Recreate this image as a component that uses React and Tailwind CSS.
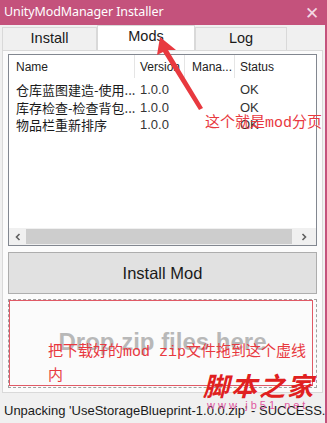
import React from "react";

const rows = [
  ["仓库蓝图建造-使用...", "1.0.0", "", "OK"],
  ["库存检查-检查背包...", "1.0.0", "", "OK"],
  ["物品栏重新排序", "1.0.0", "", "OK"],
];

export default function App() {
  return (
    <div className="relative w-[327px] h-[423px] overflow-hidden bg-[#f0f0f0] font-['Noto_Sans','Noto_Sans_CJK_SC',sans-serif] text-[#1a1a1a]">
      {/* title bar */}
      <div className="flex h-[25px] items-center justify-between bg-[#c4527c] pl-[4px] pr-[8px] text-white">
        <span className="text-[12.5px] leading-none tracking-[-0.1px]">UnityModManager Installer</span>
        <span className="text-[17px] leading-none font-light text-[#f3d9e3]">✕</span>
      </div>

      <div className="flex h-[398px] flex-col border-r-2 border-[#c4527c]">
        {/* tabs */}
        <div className="flex h-[25px] items-end pl-[2px] font-['Liberation_Sans',sans-serif] text-[14.5px]">
          <div className="flex h-[23px] w-[95px] items-center justify-center border border-b-0 border-[#d9d9d9] bg-[#f0f0f0]">Install</div>
          <div className="-mb-px flex h-[26px] w-[98px] items-center justify-center border border-b-0 border-[#d9d9d9] bg-white pb-[3px]">Mods</div>
          <div className="flex h-[23px] w-[92px] items-center justify-center border border-b-0 border-[#d9d9d9] bg-[#f0f0f0]">Log</div>
        </div>

        {/* tab page */}
        <div className="mx-[2px] flex h-[343px] flex-col border border-[#d9d9d9] bg-[#fbfbfb] px-[5px] pt-[3px]">
          {/* list view */}
          <div className="flex h-[192px] flex-col border border-[#828790] bg-white">
            <div className="flex h-[23px] items-center font-['Liberation_Sans',sans-serif] text-[12px] text-[#222]">
              <div className="w-[125px] pl-[7px]">Name</div>
              <div className="h-full w-px bg-[#e5e5e5]" />
              <div className="w-[49px] pl-[5px]">Version</div>
              <div className="h-full w-px bg-[#e5e5e5]" />
              <div className="w-[49px] pl-[7px]">Mana...</div>
              <div className="h-full w-px bg-[#e5e5e5]" />
              <div className="pl-[5px]">Status</div>
            </div>
            <div className="flex flex-col pt-[3px] text-[13px]">
              {rows.map((r, i) => (
                <div key={i} className="flex h-[17.5px] items-center leading-none">
                  <div className="w-[126px] whitespace-nowrap pl-[7px] font-['Noto_Sans_CJK_SC',sans-serif] text-[13px]">{r[0]}</div>
                  <div className="w-[50px] pl-[5px] font-['Liberation_Sans',sans-serif] text-[#333]">{r[1]}</div>
                  <div className="w-[50px]" />
                  <div className="pl-[5px] font-['Liberation_Sans',sans-serif] text-[#333]">{r[3]}</div>
                </div>
              ))}
            </div>
            <div className="flex-1" />
            {/* horizontal scrollbar */}
            <div className="flex h-[17px] items-center bg-[#f0f0f0]">
              <div className="flex w-[17px] items-center justify-center text-[#606060]">
                <svg width="8" height="8" viewBox="0 0 8 8"><path d="M5.5 1 L2.5 4 L5.5 7" fill="none" stroke="#606060" strokeWidth="1.6" /></svg>
              </div>
              <div className="h-[15px] flex-1 bg-[#cdcdcd]" />
              <div className="flex w-[24px] items-center justify-center">
                <svg width="8" height="8" viewBox="0 0 8 8"><path d="M2.5 1 L5.5 4 L2.5 7" fill="none" stroke="#606060" strokeWidth="1.6" /></svg>
              </div>
            </div>
          </div>

          {/* install button */}
          <div className="mt-[6px] flex h-[42px] items-center justify-center border border-[#adadad] bg-[#e1e1e1] font-['Liberation_Sans',sans-serif] text-[16.5px] text-[#1a1a1a]">
            Install Mod
          </div>

          {/* drop zone */}
          <div className="mt-[5px] flex h-[89px] items-center justify-center border border-dashed border-[#a0a0a0]">
            <span className="pb-[4px] font-['Liberation_Sans',sans-serif] text-[24px] font-bold text-[#b8b8b8]">Drop zip files here</span>
          </div>
        </div>

        {/* status */}
        <div className="flex flex-1 items-center pl-[4px] pt-[6px] font-['Liberation_Sans',sans-serif] text-[13px] text-[#1a1a1a]">
          <span className="whitespace-nowrap">Unpacking 'UseStorageBlueprint-1.0.0.zip' - SUCCESS.</span>
        </div>
      </div>

      {/* annotations overlay */}
      <svg className="absolute left-0 top-0" width="327" height="423" viewBox="0 0 327 423">
        <polygon points="160,37 176,50 168,50 203,108 199,110 163,52 157,55" fill="#e8393f" />
      </svg>
      <div className="absolute left-[205px] top-[113px] whitespace-nowrap font-['Noto_Sans_CJK_SC',serif] text-[15px] leading-none text-[#e8393f]">
        这个就是<span className="font-['Liberation_Mono',monospace]">mod</span>分页
      </div>
      <div className="absolute left-[9px] top-[300px] h-[86px] w-[304px] border border-[#e05a66]" />
      <div className="absolute left-[48px] top-[339px] whitespace-nowrap font-['Noto_Sans_CJK_SC',serif] text-[15px] leading-[21px] text-[#e8393f]">
        把下载好的<span className="font-['Liberation_Mono',monospace]">mod zip</span>文件拖到这个虚线
        <br />
        内
      </div>
      <div className="absolute left-[203px] top-[372px] whitespace-nowrap font-['Noto_Sans_CJK_SC',serif] text-[26px] font-bold italic leading-none tracking-[2px] text-[#e02020]">
        脚本之家
      </div>
      <div className="absolute left-[207px] top-[400px] whitespace-nowrap font-['Liberation_Sans',sans-serif] text-[11px] leading-none tracking-[3px] text-[#e05aa0]">
        www.jb51.net
      </div>
    </div>
  );
}
